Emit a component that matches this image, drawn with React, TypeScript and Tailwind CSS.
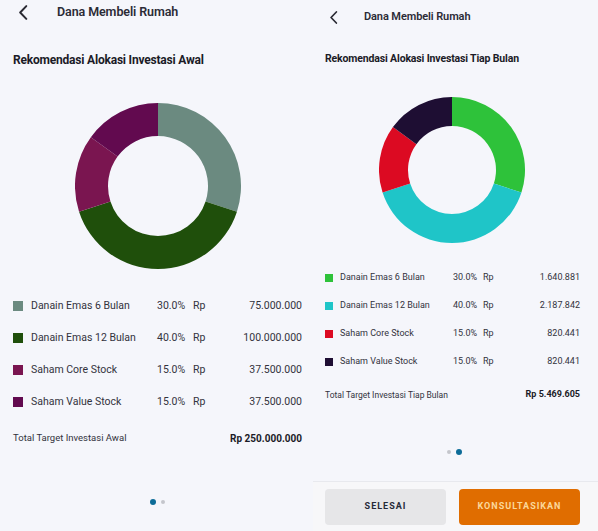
import React from "react";

type Slice = { pct: number; color: string };

function Donut({ size, inner, slices }: { size: number; inner: number; slices: Slice[] }) {
  const r = size / 2;
  const cx = r;
  const cy = r;
  let acc = 0;
  const paths = slices.map((s, i) => {
    const a0 = (acc / 100) * Math.PI * 2;
    acc += s.pct;
    const a1 = (acc / 100) * Math.PI * 2;
    const large = a1 - a0 > Math.PI ? 1 : 0;
    const p = (ang: number, rad: number) => [cx + rad * Math.sin(ang), cy - rad * Math.cos(ang)];
    const [x0, y0] = p(a0, r);
    const [x1, y1] = p(a1, r);
    const [x2, y2] = p(a1, inner);
    const [x3, y3] = p(a0, inner);
    const d = `M${x0} ${y0} A${r} ${r} 0 ${large} 1 ${x1} ${y1} L${x2} ${y2} A${inner} ${inner} 0 ${large} 0 ${x3} ${y3} Z`;
    return <path key={i} d={d} fill={s.color} />;
  });
  return (
    <svg width={size} height={size} viewBox={`0 0 ${size} ${size}`}>
      {paths}
    </svg>
  );
}

function Chevron({ w, h }: { w: number; h: number }) {
  return (
    <svg width={w} height={h} viewBox="0 0 10 16" fill="none">
      <path d="M8.5 1.2 L2 8 L8.5 14.8" stroke="#2a2a33" strokeWidth="2.1" strokeLinecap="round" strokeLinejoin="round" />
    </svg>
  );
}

const font = { fontFamily: "Roboto, 'Noto Sans', sans-serif" };

const leftRows = [
  { c: "#6b8a80", n: "Danain Emas 6 Bulan", p: "30.0%", v: "75.000.000" },
  { c: "#1f4f0b", n: "Danain Emas 12 Bulan", p: "40.0%", v: "100.000.000" },
  { c: "#7a1550", n: "Saham Core Stock", p: "15.0%", v: "37.500.000" },
  { c: "#620a4f", n: "Saham Value Stock", p: "15.0%", v: "37.500.000" },
];

const rightRows = [
  { c: "#2ec23a", n: "Danain Emas 6 Bulan", p: "30.0%", v: "1.640.881" },
  { c: "#1fc5c8", n: "Danain Emas 12 Bulan", p: "40.0%", v: "2.187.842" },
  { c: "#dc0a22", n: "Saham Core Stock", p: "15.0%", v: "820.441" },
  { c: "#1e0e33", n: "Saham Value Stock", p: "15.0%", v: "820.441" },
];

export default function App() {
  return (
    <div className="flex w-[598px] h-[531px] bg-[#f5f6fb] overflow-hidden" style={font}>
      {/* Left panel */}
      <div className="w-[312px] h-full flex flex-col">
        <div className="h-[24px] flex items-center">
          <div className="ml-[18px] w-[10px] flex items-center">
            <Chevron w={10} h={15} />
          </div>
          <div className="ml-[29px] text-[12.5px] font-semibold text-[#2b2b36] tracking-[-0.1px]">Dana Membeli Rumah</div>
        </div>
        <div className="mt-[28px] h-[16px] flex items-center pl-[13px] text-[12px] font-bold text-[#1b1b27] tracking-[-0.2px]">
          Rekomendasi Alokasi Investasi Awal
        </div>
        <div className="mt-[35px] ml-[75px]">
          <Donut
            size={166}
            inner={50}
            slices={leftRows.map((r) => ({ pct: parseFloat(r.p), color: r.c }))}
          />
        </div>
        <div className="mt-[21px] flex flex-col">
          {leftRows.map((r) => (
            <div key={r.n} className="h-[32px] flex items-center pl-[13px] pr-[10px] text-[10.5px] text-[#33333d]">
              <div className="w-[10px] h-[10px]" style={{ backgroundColor: r.c }} />
              <div className="ml-[8px] w-[126px]">{r.n}</div>
              <div className="w-[36px]">{r.p}</div>
              <div>Rp</div>
              <div className="flex-1 text-right">{r.v}</div>
            </div>
          ))}
        </div>
        <div className="mt-[10px] h-[20px] flex items-center justify-between pl-[13px] pr-[10px]">
          <div className="text-[9.5px] text-[#33333d]">Total Target Investasi Awal</div>
          <div className="text-[10px] font-bold text-[#1b1b27]">Rp 250.000.000</div>
        </div>
        <div className="mt-[50px] h-[8px] flex items-center justify-center gap-[5px] pl-[2px]">
          <div className="w-[6px] h-[6px] rounded-full bg-[#0d6c98]" />
          <div className="w-[4px] h-[4px] rounded-full bg-[#c4c6cc]" />
        </div>
      </div>

      {/* Right panel */}
      <div className="w-[286px] h-full flex flex-col">
        <div className="h-[34px] flex items-center">
          <div className="ml-[17px] w-[10px] flex items-center">
            <Chevron w={9} h={13} />
          </div>
          <div className="ml-[25px] text-[11px] font-semibold text-[#2b2b36] tracking-[-0.1px]">Dana Membeli Rumah</div>
        </div>
        <div className="mt-[18px] h-[14px] flex items-center pl-[13px] text-[10.5px] font-bold text-[#1b1b27] tracking-[-0.15px]">
          Rekomendasi Alokasi Investasi Tiap Bulan
        </div>
        <div className="mt-[31px] ml-[67px]">
          <Donut
            size={146}
            inner={44}
            slices={rightRows.map((r) => ({ pct: parseFloat(r.p), color: r.c }))}
          />
        </div>
        <div className="mt-[21px] flex flex-col">
          {rightRows.map((r) => (
            <div key={r.n} className="h-[28px] flex items-center pl-[13px] pr-[18px] text-[9px] text-[#33333d]">
              <div className="w-[8px] h-[8px]" style={{ backgroundColor: r.c }} />
              <div className="ml-[7px] w-[113px]">{r.n}</div>
              <div className="w-[30px]">{r.p}</div>
              <div>Rp</div>
              <div className="flex-1 text-right">{r.v}</div>
            </div>
          ))}
        </div>
        <div className="mt-[11px] h-[16px] flex items-center justify-between pl-[13px] pr-[18px]">
          <div className="text-[8.5px] text-[#33333d]">Total Target Investasi Tiap Bulan</div>
          <div className="text-[9px] font-bold text-[#1b1b27]">Rp 5.469.605</div>
        </div>
        <div className="mt-[46px] h-[6px] flex items-center justify-center gap-[5px] pr-[1px]">
          <div className="w-[4px] h-[4px] rounded-full bg-[#c4c6cc]" />
          <div className="w-[6px] h-[6px] rounded-full bg-[#0d6c98]" />
        </div>
        <div className="mt-[26px] flex-1 ml-[1px] bg-[#f7f7f9] border-t border-[#e8e9ee] flex gap-[13px] pl-[12px] pt-[7px]">
          <div className="w-[121px] h-[36px] rounded-[4px] bg-[#e6e6e8] flex items-center justify-center text-[9px] font-bold tracking-[1px] text-[#262a38]">
            SELESAI
          </div>
          <div className="w-[121px] h-[36px] rounded-[4px] bg-[#e06d00] flex items-center justify-center text-[9px] font-bold tracking-[1px] text-[#fbd89a]">
            KONSULTASIKAN
          </div>
        </div>
      </div>
    </div>
  );
}
